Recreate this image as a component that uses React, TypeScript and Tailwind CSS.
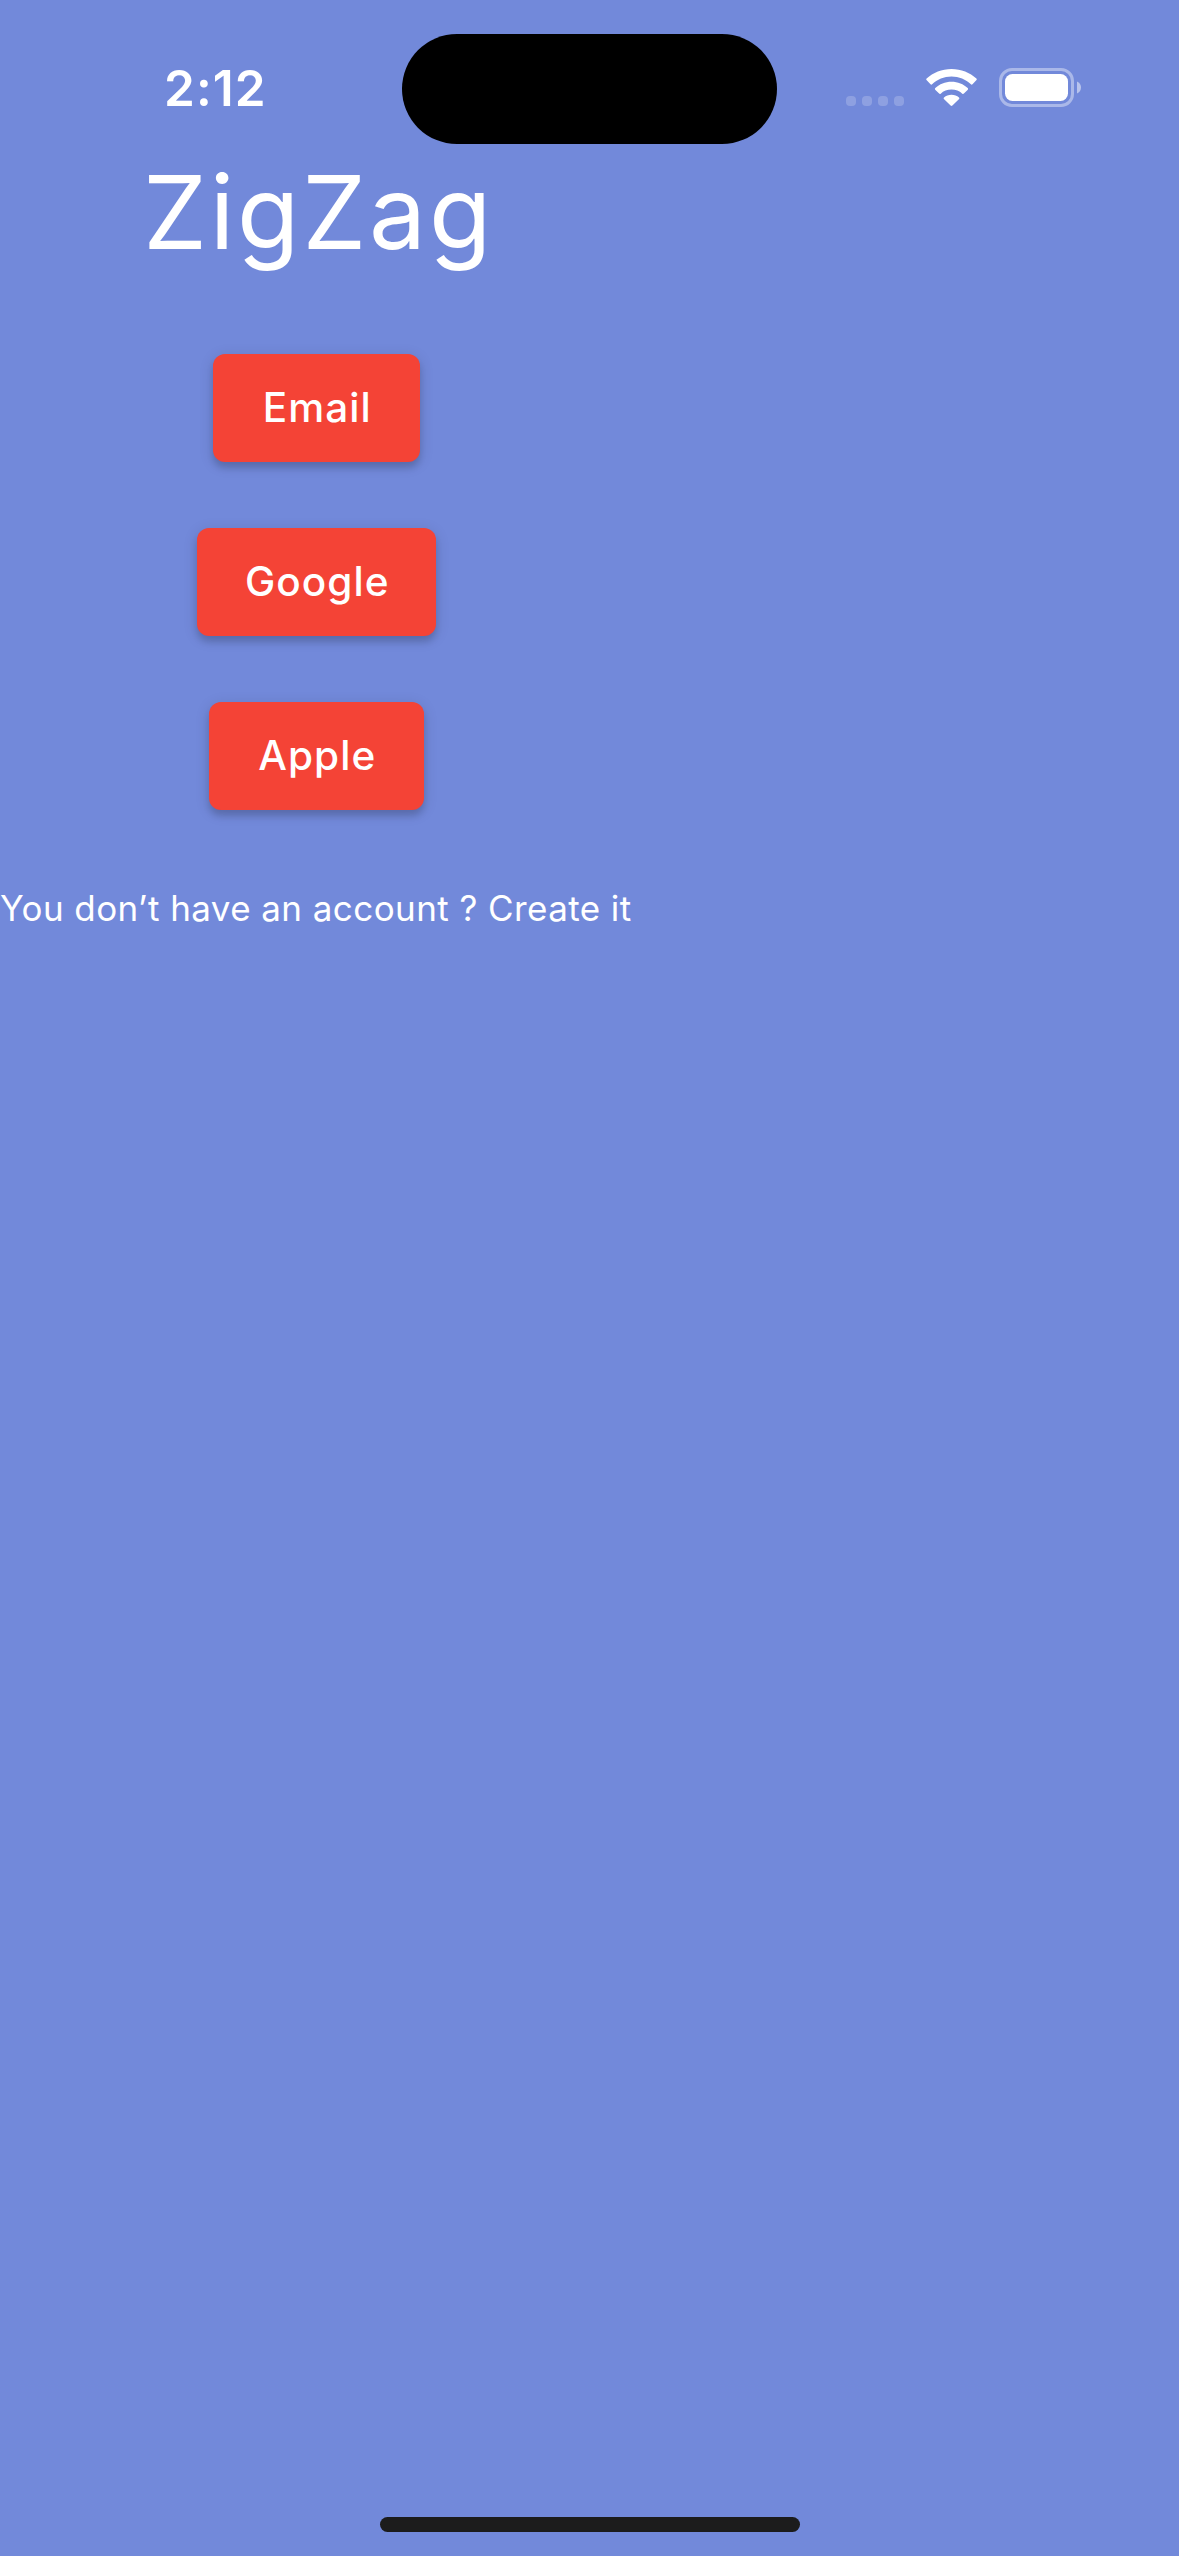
import React from "react";

const providers = [
  { label: "Email", width: "w-[207px]" },
  { label: "Google", width: "w-[239.5px]" },
  { label: "Apple", width: "w-[215px]" },
];

function CellularDots() {
  return (
    <div className="mt-[96px] flex gap-[6px]">
      {[0, 1, 2, 3].map((dot) => (
        <span key={dot} className="size-[10px] rounded-[4px] bg-white/20" />
      ))}
    </div>
  );
}

function WifiIcon() {
  return (
    <svg className="mt-[68px] ml-[22px] h-[39px] w-[51px]" viewBox="0 0 51 39" fill="white">
      <path d="M25.5 8.6C33 8.600 39.800 11.500 44.900 16.300Q45.700 17 46.500 16.200L50.500 12.100Q51.200 11.300 50.400 10.500C43.900 4.500 35.200 .9 25.500 .9S7.100 4.500.6 10.500Q-.2 11.300.5 12.100L4.500 16.200Q5.300 17 6.100 16.300C11.200 11.500 18 8.600 25.500 8.600Z" />
      <path d="M25.500 21.600C29.700 21.600 33.500 23.100 36.300 25.700Q37.100 26.400 37.900 25.600L41.800 21.700Q42.500 20.900 41.700 20.100C37.500 16.100 31.800 13.700 25.500 13.700S13.500 16.100 9.300 20.100Q8.500 20.900 9.200 21.700L13.100 25.600Q13.900 26.400 14.700 25.700C17.500 23.100 21.300 21.600 25.500 21.600Z" />
      <path d="M33.100 31Q33.800 30.200 33 29.500C31 27.700 28.400 26.700 25.500 26.700S20 27.700 18 29.500Q17.200 30.200 17.900 31L24.600 37.500Q25.500 38.300 26.400 37.500Z" />
    </svg>
  );
}

function BatteryIcon() {
  return (
    <svg className="mt-[68px] ml-[22px] h-[39px] w-[82px]" viewBox="0 0 82 39" fill="white">
      <rect x="1.5" y="1.5" width="72" height="36" rx="11.5" fill="none" stroke="white" strokeOpacity="0.4" strokeWidth="3" />
      <rect x="6" y="6" width="63" height="27" rx="7.5" />
      <path d="M78 13.500v12c2.400-1 4-3.300 4-6s-1.600-5-4-6z" fillOpacity="0.5" />
    </svg>
  );
}

function StatusBar() {
  return (
    <header className="flex h-[153px] w-full shrink-0 items-start">
      <div className="w-[401.5px] shrink-0 pt-[58px] pl-[164px] text-[49.5px] leading-[60px] font-semibold tracking-[1.1px]">
        2:12
      </div>
      <div className="mt-[33.5px] h-[110.5px] w-[375.5px] shrink-0 rounded-full bg-black" />
      <div className="ml-[69px] flex items-start">
        <CellularDots />
        <WifiIcon />
        <BatteryIcon />
      </div>
    </header>
  );
}

export default function App() {
  return (
    <div className="flex h-[2556px] w-[1179px] flex-col items-start overflow-hidden bg-[#7289da] font-[Inter,sans-serif] text-white">
      <StatusBar />
      <main className="flex w-[633px] flex-1 flex-col items-center">
        <h1 className="pl-[4px] text-[101.7px] leading-[118px] font-normal tracking-[2.8px]">ZigZag</h1>
        <div className="mt-[83px] flex flex-col items-center gap-[66px]">
          {providers.map(({ label, width }) => (
            <button
              key={label}
              className={`${width} flex h-[108px] items-center justify-center rounded-[12px] bg-[#f44336] pl-[1.5px] text-[40.5px] leading-[50px] font-medium tracking-[1.05px] shadow-[0_3px_3px_-6px_rgba(0,0,0,0.2),0_6px_6px_0_rgba(0,0,0,0.14),0_3px_15px_0_rgba(0,0,0,0.12)]`}
            >
              {label}
            </button>
          ))}
        </div>
        <p className="mt-[73px] w-full text-[35px] leading-[50px] font-normal tracking-[0.42px] whitespace-nowrap">
          You don’t have an account ? Create it
        </p>
      </main>
      <div className="mb-[24px] ml-[380px] h-[15px] w-[420px] rounded-full bg-[#1c1c1c]" />
    </div>
  );
}
